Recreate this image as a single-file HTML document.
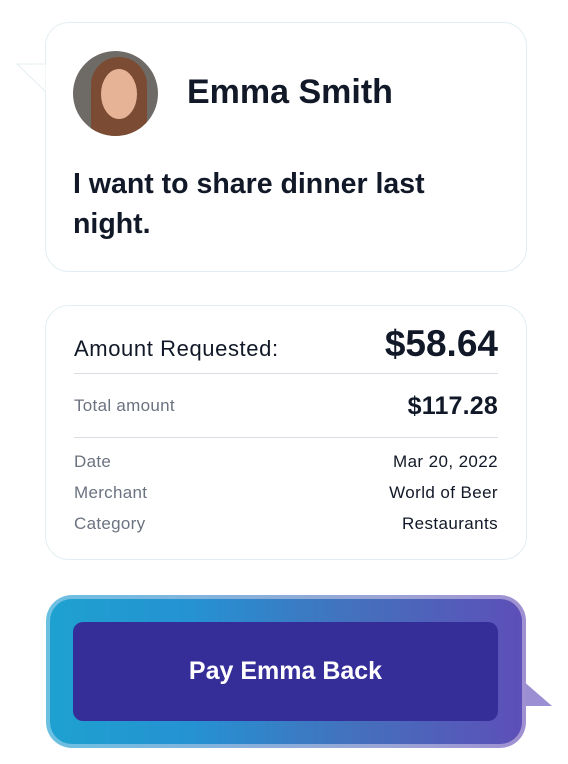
<!DOCTYPE html>
<html><head><style>
body{margin:0;width:568px;height:764px;background:#fff;font-family:"Liberation Sans",sans-serif;position:relative;overflow:hidden}
.card{position:absolute;left:45px;width:482px;background:#fff;border:1px solid #e3eef2;border-radius:24px;box-sizing:border-box}
.t{position:absolute;color:#111827}
.l{position:absolute;left:28px;font-size:17px;letter-spacing:0.3px;color:#6b7280}
.r{position:absolute;right:28px;font-size:17px;letter-spacing:0.4px;color:#111827}
</style></head><body>
<div class="card" style="top:22px;height:250px"></div>
<svg style="position:absolute;left:0;top:0" width="60" height="110"><path d="M46 64 L17 64 L46 92 Z" fill="#fff" stroke="#e3eef2"/><rect x="46" y="50" width="4" height="50" fill="#fff"/></svg>
<div style="position:absolute;left:73px;top:51px;width:85px;height:85px;border-radius:50%;overflow:hidden;background:#6e6a66">
<div style="position:absolute;left:18px;top:6px;width:56px;height:90px;border-radius:28px 28px 10px 10px;background:#7b4b33"></div>
<div style="position:absolute;left:28px;top:18px;width:36px;height:50px;border-radius:50%;background:#e7b396"></div>
</div>
<div class="t" style="left:187px;top:73px;font-size:34px;font-weight:bold">Emma Smith</div>
<div class="t" style="left:73px;top:164px;font-size:28.5px;line-height:40px;font-weight:bold;width:420px;color:#111827">I want to share dinner last night.</div>
<div class="card" style="top:305px;height:255px">
<div class="t" style="left:28px;top:30px;font-size:22px;letter-spacing:0.6px">Amount Requested:</div>
<div class="t" style="right:28px;left:auto;top:17px;font-size:37px;font-weight:bold">$58.64</div>
<div style="position:absolute;left:28px;right:28px;top:67px;border-top:1px solid #d9dde3"></div>
<div class="l" style="top:90px">Total amount</div>
<div class="r" style="top:86px;font-size:25px;font-weight:bold;letter-spacing:0.2px">$117.28</div>
<div style="position:absolute;left:28px;right:28px;top:131px;border-top:1px solid #d9dde3"></div>
<div class="l" style="top:146px">Date</div><div class="r" style="top:146px">Mar 20, 2022</div>
<div class="l" style="top:177px">Merchant</div><div class="r" style="top:177px">World of Beer</div>
<div class="l" style="top:208px">Category</div><div class="r" style="top:208px">Restaurants</div>
</div>
<svg style="position:absolute;left:515px;top:675px" width="45" height="40"><path d="M7 5 L37 31 L7 31 Z" fill="#9b8ed3"/></svg>
<div style="position:absolute;left:46px;top:595px;width:480px;height:153px;border-radius:26px;background:linear-gradient(90deg,#6cc0e2,#9aa5d6 70%,#a090d2);"></div>
<div style="position:absolute;left:50px;top:599px;width:472px;height:145px;border-radius:22px;background:linear-gradient(90deg,#1ea1d0,#2592d2 30%,#4470bd 65%,#5d4fb8)"></div>
<div style="position:absolute;left:73px;top:622px;width:425px;height:99px;border-radius:10px;background:#352e99;color:#fff;font-size:25px;font-weight:bold;text-align:center;line-height:99px">Pay Emma Back</div>
</body></html>
